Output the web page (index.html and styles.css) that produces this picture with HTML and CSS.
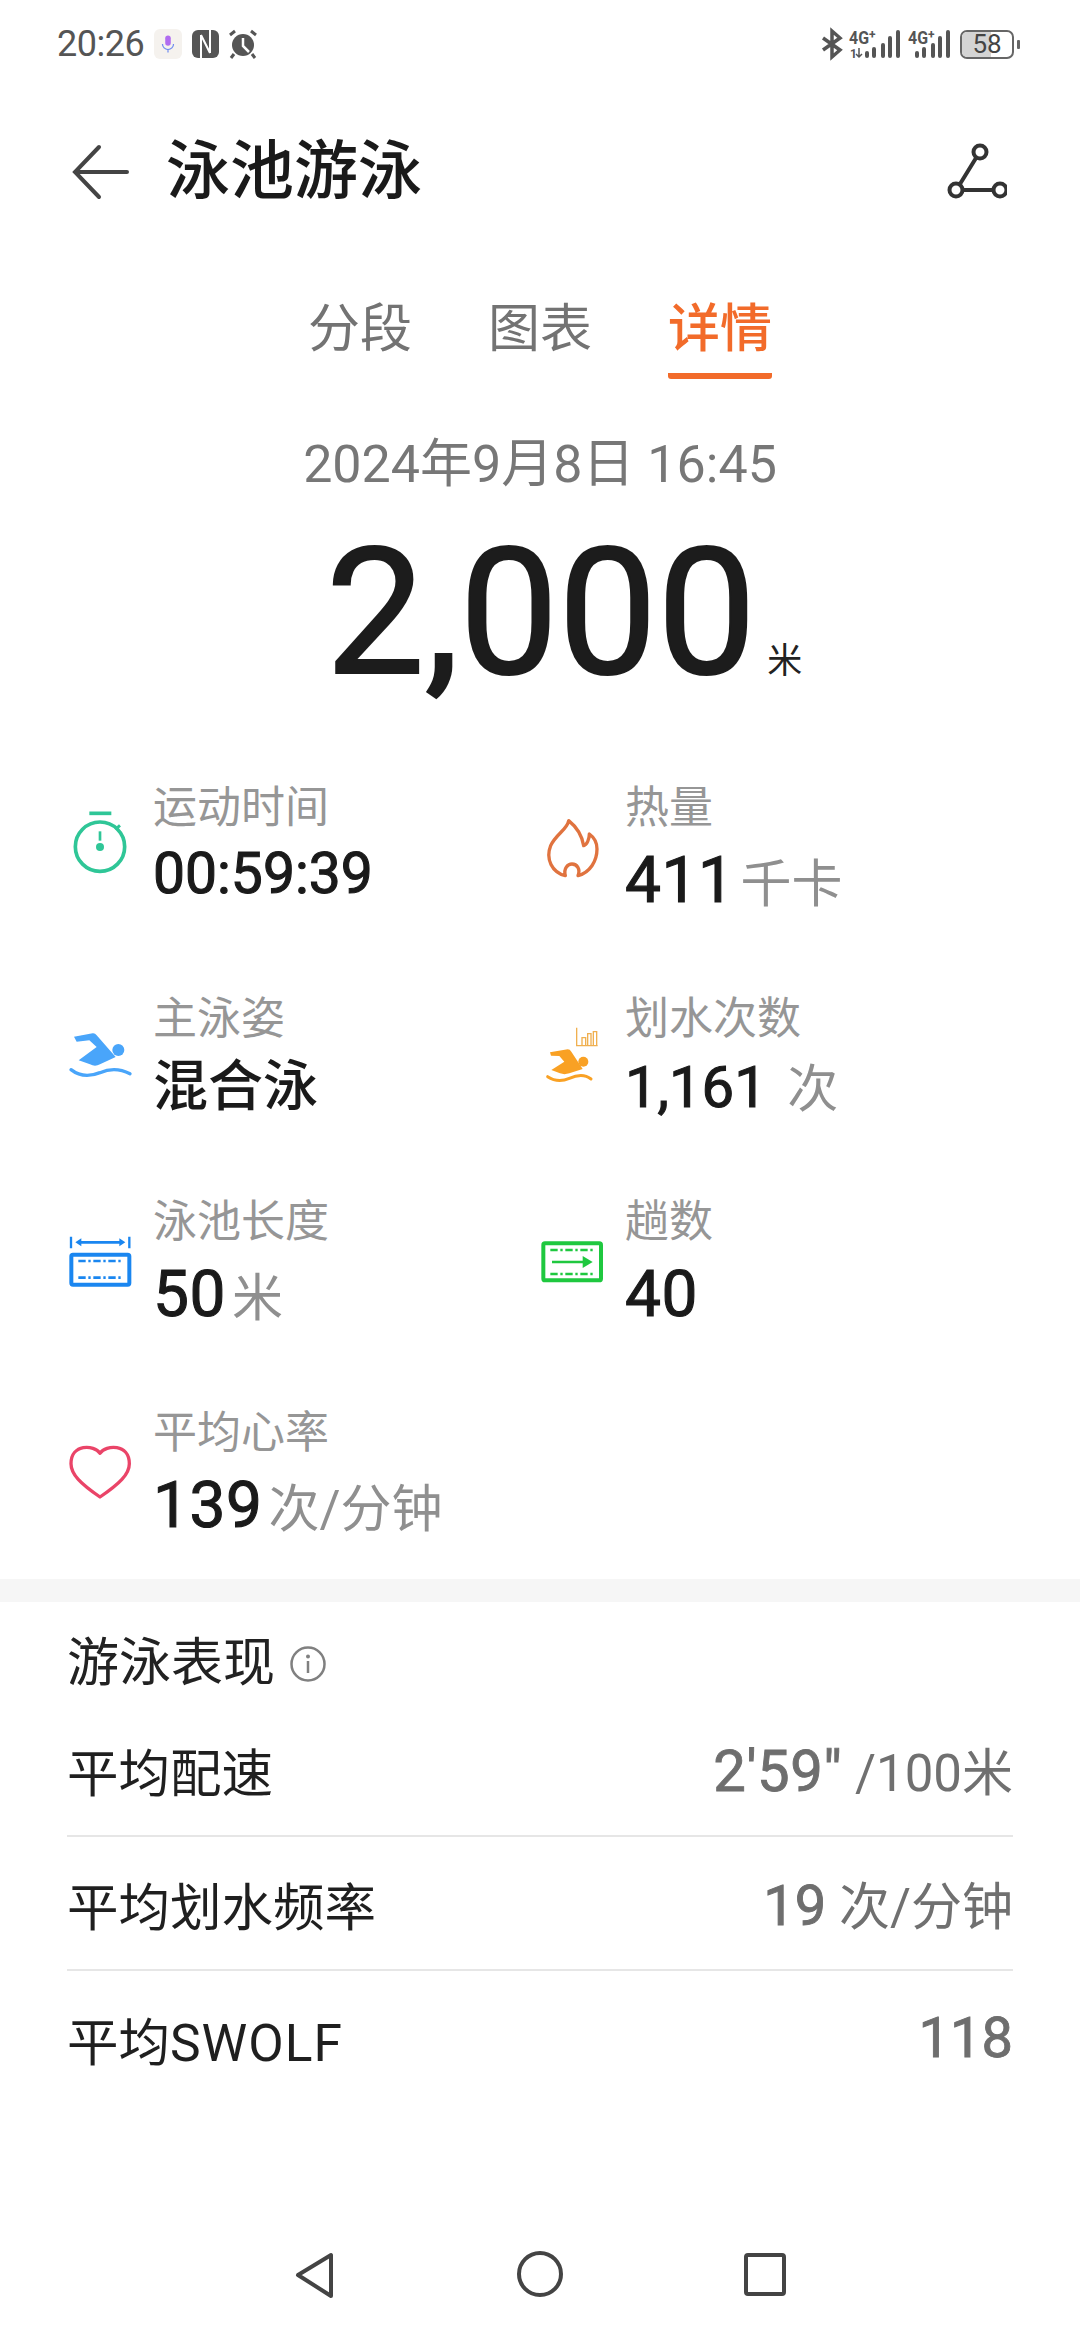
FILE: index.html
```html
<!DOCTYPE html>
<html lang="zh">
<head>
<meta charset="utf-8">
<title>泳池游泳</title>
<link rel="stylesheet" href="styles.css">
</head>
<body>
<div class="page">
  <header class="status">
    <div class="status-left">
      <span class="clock">20:26</span>
      <span class="mic-chip">
        <svg class="mic" viewBox="0 0 26 30"><rect x="8.500" y="1" width="9" height="17" rx="4.500" fill="#b06cf0"/><path d="M4 15a9 9 0 0 0 18 0M13 24v5" fill="none" stroke="#6f8cf0" stroke-width="2"/></svg>
      </span>
      <svg class="st-ic" viewBox="0 0 27 28" width="27" height="28"><rect x="0" y="0" width="27" height="28" rx="6" fill="#555"/><path d="M9 5V28M9 5L18 23M18 0V23" fill="none" stroke="#fff" stroke-width="2"/></svg>
      <svg class="st-ic" viewBox="0 0 30 30" width="30" height="30"><circle cx="15" cy="16" r="11" fill="#555"/><path d="M15 9v8l6 6" fill="none" stroke="#fff" stroke-width="2.500"/><path d="M2 6l5-4M28 6l-5-4M6 25l-3 4M24 25l3 4" stroke="#555" stroke-width="3" fill="none"/></svg>
    </div>
    <div class="status-right">
      <svg class="st-ic" viewBox="0 0 20 28" width="20" height="28"><path d="M1 8l17 12-8 7V1l8 7L1 20" fill="none" stroke="#555" stroke-width="3.500"/></svg>
      <svg class="st-ic" viewBox="0 0 52 30" width="52" height="30"><text class="net" x="0" y="15" textLength="20" lengthAdjust="spacingAndGlyphs">4G</text><text class="net-plus" x="20" y="10">+</text><text class="net-arrow" x="1" y="29">1</text><path d="M10 19v9M7 25l3 3 3-3" fill="none" stroke="#555" stroke-width="1.500"/><rect x="16" y="22" width="4" height="7" rx="2" fill="#555"/><rect x="23" y="18" width="4" height="11" rx="2" fill="#555"/><rect x="32" y="14" width="4" height="15" rx="2" fill="#555"/><rect x="39" y="7" width="4" height="22" rx="2" fill="#555"/><rect x="47" y="1" width="4" height="28" rx="2" fill="#555"/></svg>
      <svg class="st-ic" viewBox="0 0 43 30" width="43" height="30"><text class="net" x="0" y="15" textLength="20" lengthAdjust="spacingAndGlyphs">4G</text><text class="net-plus" x="20" y="10">+</text><rect x="7" y="22" width="4" height="7" rx="2" fill="#555"/><rect x="14" y="18" width="4" height="11" rx="2" fill="#555"/><rect x="23" y="14" width="4" height="15" rx="2" fill="#555"/><rect x="30" y="7" width="4" height="22" rx="2" fill="#555"/><rect x="38" y="1" width="4" height="28" rx="2" fill="#555"/></svg>
      <span class="battery"><span class="battery-fill"></span><span class="battery-num">58</span></span>
      <span class="battery-tip"></span>
    </div>
  </header>

  <div class="appbar">
    <svg class="back" viewBox="0 0 60 60" width="60" height="60"><path d="M56 30H4M28 5L4 30l24 25" fill="none" stroke="#444" stroke-width="4" stroke-linecap="round"/></svg>
    <h1 class="title">泳池游泳</h1>
    <svg class="route" viewBox="0 0 60 60" width="60" height="60"><circle cx="33" cy="10" r="6.500"/><circle cx="9" cy="48" r="6.500"/><circle cx="53" cy="48" r="6.500"/><path d="M29 16L13 42M16 48h30"/></svg>
  </div>

  <nav class="tabs">
    <div class="tab">分段</div>
    <div class="tab">图表</div>
    <div class="tab tab-on">详情</div>
  </nav>

  <div class="date">2024年9月8日 16:45</div>
  <div class="hero"><span class="hero-num">2,000</span><span class="hero-unit">米</span></div>

  <section class="stats">
    <div class="stat">
      <svg class="stat-ic" viewBox="30 112 240 240"><g fill="none" stroke="#2fc697" stroke-width="11"><circle cx="150" cy="228" r="74"/><path d="M118 128h66"/><path d="M150 182v28" stroke-width="8"/><path d="M196 176l14-12" stroke-width="9"/></g><circle cx="150" cy="229" r="12" fill="#2fc697"/></svg>
      <div class="stat-text"><div class="stat-label">运动时间</div><div class="stat-value v-time">00:59:39</div></div>
    </div>
    <div class="stat">
      <svg class="stat-ic" viewBox="40 121 240 240"><path d="M150 150C146 176 112 190 96 225C80 265 100 305 140 315C134 292 148 280 160 280C175 280 186 295 178 315C215 305 235 270 235 235C235 215 226 200 212 190C212 205 205 222 195 225C190 195 175 170 150 150Z" fill="none" stroke="#e0733f" stroke-width="10" stroke-linejoin="round"/></svg>
      <div class="stat-text"><div class="stat-label">热量</div><div class="stat-value v-big">411<span class="unit">千卡</span></div></div>
    </div>
    <div class="stat">
      <svg class="stat-ic" viewBox="30 744 240 240"><circle cx="205" cy="837" r="18" fill="#49a5fa"/><path d="M72 797L128 787Q135 786 140 793L197 858L150 880Q135 888 120 880L86 868L140 828L118 808L80 812Z" fill="#49a5fa"/><path d="M63 896Q100 925 150 905Q195 885 240 908" fill="none" stroke="#49a5fa" stroke-width="10" stroke-linecap="round"/></svg>
      <div class="stat-text"><div class="stat-label">主泳姿</div><div class="stat-value v-cjk">混合泳</div></div>
    </div>
    <div class="stat">
      <svg class="stat-ic" viewBox="38 745 240 240"><circle cx="192" cy="870" r="15" fill="#f9a124"/><path d="M92 842L145 833Q152 833 156 840L190 892L150 905Q135 910 122 905L96 895L135 870L120 853L95 852Z" fill="#f9a124"/><path d="M85 915Q115 935 150 920Q190 902 215 922" fill="none" stroke="#f9a124" stroke-width="9" stroke-linecap="round"/><path d="M172 768V822H235M188 822V798H199V822M205 822V786H215V822M222 822V780H232V822" fill="none" stroke="#f0b050" stroke-width="4"/></svg>
      <div class="stat-text"><div class="stat-label">划水次数</div><div class="stat-value v-mid">1,161 <span class="unit unit-wide">次</span></div></div>
    </div>
    <div class="stat">
      <svg class="stat-ic" viewBox="30 105 240 240"><g fill="none" stroke="#1a86f0"><rect x="64" y="194" width="174" height="90" rx="5" stroke-width="12"/><path d="M85 213h135M85 263h135" stroke-width="8" stroke-dasharray="22 8 7 8"/><path d="M63 140v35M238 140v35" stroke-width="7"/><path d="M85 157h132" stroke-width="8"/></g><path d="M76 157l18-12v24zM226 157l-18-12v24z" fill="#1a86f0"/></svg>
      <div class="stat-text"><div class="stat-label">泳池长度</div><div class="stat-value v-big">50<span class="unit">米</span></div></div>
    </div>
    <div class="stat">
      <svg class="stat-ic" viewBox="40 109 240 240"><g fill="none" stroke="#1fc83f"><rect x="74" y="164" width="173" height="111" rx="5" stroke-width="12"/><path d="M95 184h135M95 256h135" stroke-width="8" stroke-dasharray="22 8 7 8"/><path d="M100 220h100" stroke-width="8"/></g><path d="M222 220l-30-18v36z" fill="#1fc83f"/></svg>
      <div class="stat-text"><div class="stat-label">趟数</div><div class="stat-value v-big">40</div></div>
    </div>
    <div class="stat">
      <svg class="stat-ic" viewBox="30 745 240 240"><path d="M150 797C132 770 63 768 63 828C63 860 92 888 150 928C208 888 238 860 238 828C238 768 168 770 150 797Z" fill="none" stroke="#ea4468" stroke-width="10" stroke-linejoin="round"/></svg>
      <div class="stat-text"><div class="stat-label">平均心率</div><div class="stat-value v-big">139<span class="unit">次/分钟</span></div></div>
    </div>
  </section>

  <div class="band"></div>

  <section class="perf">
    <div class="perf-head">
      <h2 class="perf-title">游泳表现</h2>
      <svg class="info" viewBox="0 0 36 36" width="36" height="36"><circle cx="18" cy="18" r="16.500" fill="none" stroke="#808080" stroke-width="2.500"/><circle cx="18" cy="10.500" r="2" fill="#808080"/><path d="M18 15v12" stroke="#808080" stroke-width="2.500"/></svg>
    </div>
    <div class="perf-row"><span class="perf-name">平均配速</span><span class="perf-val"><span class="big big-pace">2'59"</span> /100米</span></div>
    <div class="perf-row"><span class="perf-name">平均划水频率</span><span class="perf-val"><span class="big">19</span> 次/分钟</span></div>
    <div class="perf-row"><span class="perf-name">平均<span class="latin">SWOLF</span></span><span class="perf-val"><span class="big">118</span></span></div>
  </section>

  <footer class="navbar">
    <svg class="nav-ic" viewBox="0 0 60 60" width="60" height="60"><path d="M13 31L46 11V52Z"/></svg>
    <svg class="nav-ic" viewBox="0 0 60 60" width="60" height="60"><circle cx="30" cy="30" r="21"/></svg>
    <svg class="nav-ic" viewBox="0 0 60 60" width="60" height="60"><rect x="11" y="11" width="38" height="39" rx="2"/></svg>
  </footer>
</div>
</body>
</html>
```

FILE: styles.css
```css
* { box-sizing: border-box; }
html, body { margin: 0; padding: 0; background: #fff; }
body { font-family: Roboto, "Noto Sans CJK SC", sans-serif; color: #1a1a1a; }
.page { width: 1080px; height: 2331px; overflow: hidden; display: flex; flex-direction: column; }

.status { height: 88px; padding: 0 60px 0 57px; display: flex; justify-content: space-between; align-items: center; flex: none; }
.status-left, .status-right { display: flex; align-items: center; }
.clock { font-size: 36px; letter-spacing: -0.5px; color: #555; width: 97px; }
.mic-chip { width: 28px; height: 30px; background: #f5f2ee; border-radius: 6px; display: flex; align-items: center; justify-content: center; margin-right: 10px; }
.mic { width: 16px; height: 20px; }
.st-ic { overflow: visible; }
.status-left .st-ic { margin-right: 9px; }
.status-right .st-ic { margin-right: 7px; }
.net { font: 700 18px Roboto, sans-serif; fill: #555; }
.net-plus { font: 700 12px Roboto, sans-serif; fill: #555; }
.net-arrow { font: 700 12px Roboto, sans-serif; fill: #555; }
.battery { position: relative; width: 54px; height: 29px; border: 2.500px solid #666; border-radius: 7px; overflow: hidden; display: flex; align-items: center; justify-content: center; margin-left: 2px; }
.battery-fill { position: absolute; left: 0; top: 0; bottom: 0; width: 58%; background: #d4d4d4; }
.battery-num { position: relative; font-size: 26px; color: #444; line-height: 1; }
.battery-tip { width: 3px; height: 9px; background: #666; margin-left: 3px; border-radius: 1px; }

.appbar { height: 168px; flex: none; display: flex; align-items: center; padding: 0 73px 0 71px; }
.back { margin-right: 35px; flex: none; }
.title { margin: 0; font-size: 64px; font-weight: 500; line-height: 1; flex: 1; }
.route { flex: none; }
.route circle, .route path { fill: none; stroke: #333; stroke-width: 4; }

.tabs { display: flex; justify-content: center; gap: 76px; padding: 49px 0 0 0; flex: none; }
.tab { width: 104px; height: 74px; font-size: 52px; line-height: 50px; color: #737373; text-align: center; }
.tab-on { color: #f26b2a; font-weight: 500; border-bottom: 6px solid #f26b2a; border-radius: 0 0 3px 3px; }

.date { margin-top: 56px; height: 60px; font-size: 52px; line-height: 60px; color: #777; text-align: center; flex: none; }
.hero { height: 288px; padding-top: 18px; display: flex; align-items: baseline; justify-content: center; padding-left: 48px; flex: none; line-height: 200px; }
.hero-num { font-size: 176px; font-weight: 400; color: #1c1c1c; -webkit-text-stroke: 2px #1c1c1c; }
.hero-unit { font-size: 35px; margin-left: 11px; color: #222; }

.stats { display: grid; grid-template-columns: 472px 1fr; grid-template-rows: 211px 203px 211px 171px; padding-left: 60px; height: 796px; flex: none; }
.stat { display: flex; align-items: center; align-self: start; }
.stat-ic { width: 80px; height: 80px; flex: none; margin-right: 13px; }
.stat-label { font-size: 44px; line-height: 50px; color: #969696; }
.stat-value { line-height: 76px; height: 76px; white-space: nowrap; font-weight: 400; -webkit-text-stroke: 1.1px #1a1a1a; color: #1a1a1a; }
.v-time { font-size: 57px; margin-top: 3px; }
.v-mid { font-size: 58px; margin-top: 5px; }
.v-big { font-size: 64px; letter-spacing: 0.5px; margin-top: 10px; }
.v-cjk { font-size: 55px; font-weight: 500; -webkit-text-stroke: 0; margin-top: 4px; }
.unit { font-size: 51px; font-weight: 400; color: #8f8f8f; -webkit-text-stroke: 0; margin-left: 6px; letter-spacing: 0; }
.unit-wide { margin-left: 6px; }

.band { height: 23px; background: #f6f6f6; flex: none; }

.perf { padding: 0 67px; flex: none; }
.perf-head { height: 101px; padding-top: 23px; display: flex; align-items: center; }
.perf-title { margin: 0 15px 0 0; font-size: 52px; font-weight: 400; color: #222; line-height: 1; }
.perf-row { height: 134px; display: flex; align-items: center; justify-content: space-between; border-bottom: 2px solid #e6e6e6; }
.perf-row:last-child { border-bottom: 0; }
.perf-name { font-size: 51.5px; color: #1f1f1f; }
.latin { letter-spacing: 1px; }
.perf-val { font-size: 51px; color: #707070; }
.big { font-size: 56px; font-weight: 400; color: #6e6e6e; -webkit-text-stroke: 0.9px #6e6e6e; }
.big-pace { font-size: 58px; letter-spacing: 0.5px; }

.navbar { margin-top: auto; height: 87px; display: flex; align-items: flex-start; justify-content: center; gap: 165px; flex: none; }
.nav-ic path, .nav-ic circle, .nav-ic rect { fill: none; stroke: #444; stroke-width: 4; stroke-linejoin: round; }
```
